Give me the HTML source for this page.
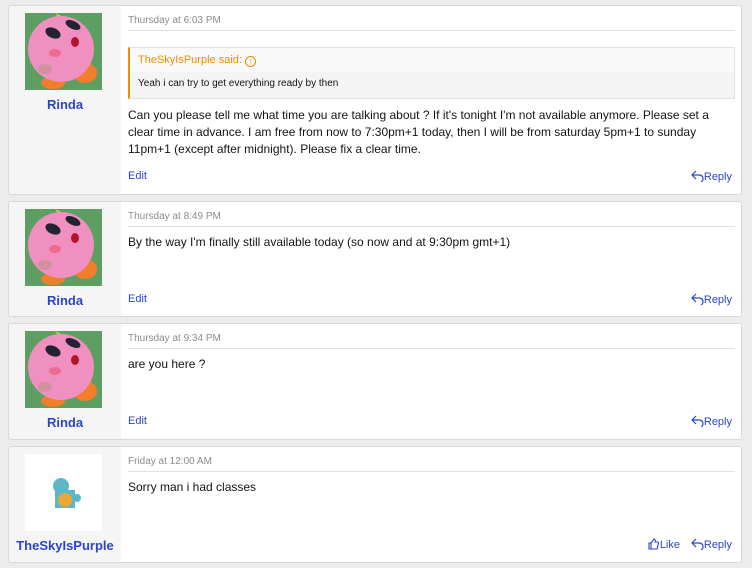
<!DOCTYPE html>
<html><head><meta charset="utf-8"><style>
body{margin:0;background:#ececec;font-family:"Liberation Sans",Arial,sans-serif;width:752px;height:568px;position:relative;overflow:hidden}
.p{position:absolute;left:8px;width:734px;background:#fff;border:1px solid #d8d8d8;border-radius:3px;box-sizing:border-box;overflow:hidden}
.l{position:absolute;left:0;top:0;bottom:0;width:112px;background:#f5f5f5}
.av{position:absolute;left:16px;top:7px;width:77px;height:77px}
.nm{position:absolute;left:0;width:112px;text-align:center;color:#2b45c9;font-weight:bold;font-size:13px}
.dt{position:absolute;left:119px;right:6px;font-size:10px;color:#8c8c8c;border-bottom:1px solid #e2e2e2;padding-bottom:4px}
.tx{position:absolute;left:119px;right:10px;font-size:12px;line-height:17px;color:#141414}
.ed{position:absolute;left:119px;font-size:11px;color:#2b45c9}
.rp{position:absolute;right:9px;font-size:11px;color:#2b45c9}
.lk{position:absolute;right:61px;font-size:11px;color:#2b45c9}
.ar{position:absolute;left:104px;width:0;height:0;border:8px solid transparent;border-right-color:#fff}
</style></head><body>
<svg width="0" height="0" style="position:absolute"><defs>
<g id="k"><rect width="77" height="77" fill="#5f9e62"/><path d="M30 0 L42 6 L38 10Z" fill="#d7d74a"/><ellipse cx="60" cy="60" rx="12" ry="10" fill="#f07e2a"/><ellipse cx="28" cy="70" rx="12" ry="6" fill="#f07e2a"/><circle cx="36" cy="36" r="33" fill="#ef90c0"/><ellipse cx="20" cy="56" rx="7" ry="5" fill="#d090a0"/><ellipse cx="48" cy="12" rx="8" ry="4" transform="rotate(25 48 12)" fill="#223"/><ellipse cx="28" cy="20" rx="8" ry="5" transform="rotate(25 28 20)" fill="#223"/><ellipse cx="50" cy="29" rx="4" ry="5" fill="#b2142a"/><ellipse cx="30" cy="40" rx="6" ry="4" fill="#f06a90"/></g>
<path id="rpi" d="M5 1 L1 5 L5 9 M1 5 H8 Q12 5 12 9 Q12 11 10 12" fill="none" stroke="#2b45c9" stroke-width="1.2"/>
</defs></svg>

<div class="p" style="top:5px;height:190px">
<div class="l"></div><div class="ar" style="top:16px"></div>
<svg class="av" style="top:7px"><use href="#k"/></svg>
<div class="nm" style="top:91px">Rinda</div>
<div class="dt" style="top:9px">Thursday at 6:03 PM</div>
<div style="position:absolute;left:119px;right:6px;top:41px;height:50px;border:1px solid #e2e2e2;border-left:2px solid #f28c00;background:#f4f4f4">
<div style="height:24px;background:#f9f9f9;color:#f28c00;font-size:11px;line-height:24px;padding-left:8px">TheSkyIsPurple said: <span style="display:inline-block;width:9px;height:9px;border:1px solid #f28c00;border-radius:50%;font-size:8px;line-height:9px;text-align:center;vertical-align:-1px">↑</span></div>
<div style="font-size:10px;color:#141414;line-height:24px;padding-left:8px">Yeah i can try to get everything ready by then</div></div>
<div class="tx" style="top:101px">Can you please tell me what time you are talking about ? If it's tonight I'm not available anymore. Please set a clear time in advance. I am free from now to 7:30pm+1 today, then I will be from saturday 5pm+1 to sunday 11pm+1 (except after midnight). Please fix a clear time.</div>
<div class="ed" style="top:164px">Edit</div>
<div class="rp" style="top:164px"><svg width="13" height="12" style="vertical-align:-2px"><use href="#rpi"/></svg>Reply</div>
</div>

<div class="p" style="top:201px;height:116px">
<div class="l"></div><div class="ar" style="top:16px"></div>
<svg class="av"><use href="#k"/></svg>
<div class="nm" style="top:91px">Rinda</div>
<div class="dt" style="top:9px">Thursday at 8:49 PM</div>
<div class="tx" style="top:32px">By the way I'm finally still available today (so now and at 9:30pm gmt+1)</div>
<div class="ed" style="top:91px">Edit</div>
<div class="rp" style="top:91px"><svg width="13" height="12" style="vertical-align:-2px"><use href="#rpi"/></svg>Reply</div>
</div>

<div class="p" style="top:323px;height:117px">
<div class="l"></div><div class="ar" style="top:16px"></div>
<svg class="av"><use href="#k"/></svg>
<div class="nm" style="top:91px">Rinda</div>
<div class="dt" style="top:9px">Thursday at 9:34 PM</div>
<div class="tx" style="top:32px">are you here ?</div>
<div class="ed" style="top:91px">Edit</div>
<div class="rp" style="top:91px"><svg width="13" height="12" style="vertical-align:-2px"><use href="#rpi"/></svg>Reply</div>
</div>

<div class="p" style="top:446px;height:117px">
<div class="l"></div><div class="ar" style="top:16px"></div>
<svg class="av" style="background:#fff"><rect x="30" y="36" width="20" height="18" fill="#5cb8c8"/><circle cx="36" cy="32" r="8" fill="#5cb8c8"/><circle cx="40" cy="46" r="7" fill="#e8a838"/><circle cx="52" cy="44" r="4" fill="#5cb8c8"/></svg>
<div class="nm" style="top:91px">TheSkyIsPurple</div>
<div class="dt" style="top:9px">Friday at 12:00 AM</div>
<div class="tx" style="top:32px">Sorry man i had classes</div>
<div class="lk" style="top:91px"><svg width="12" height="12" style="vertical-align:-2px"><path d="M1 5 H3 V11 H1Z M3 5 L6 1 Q8 1 7 4 H10 Q11 5 10 7 L9 11 H3" fill="none" stroke="#2b45c9" stroke-width="1.1"/></svg>Like</div>
<div class="rp" style="top:91px"><svg width="13" height="12" style="vertical-align:-2px"><use href="#rpi"/></svg>Reply</div>
</div>
</body></html>
